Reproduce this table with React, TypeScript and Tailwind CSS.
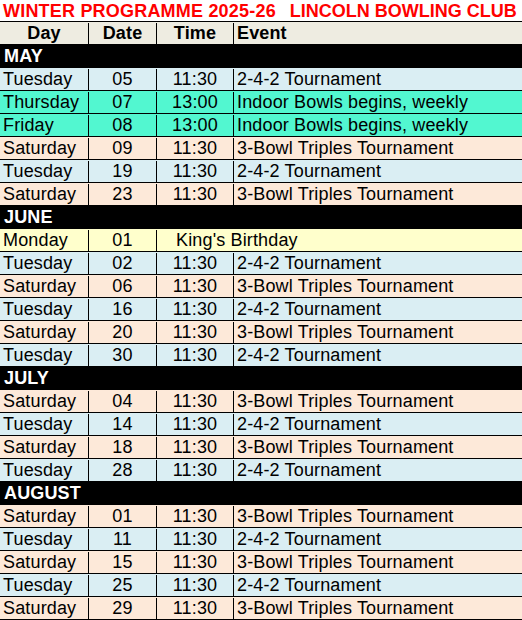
type Row =
  | { kind: 'month'; label: string }
  | { kind: 'event'; day: string; date: string; time: string; event: string; tone: 'blue' | 'peach' | 'teal' }
  | { kind: 'holiday'; day: string; date: string; label: string };

const t242 = '2-4-2 Tournament';
const t3b = '3-Bowl Triples Tournament';

const rows: Row[] = [
  { kind: 'month', label: 'MAY' },
  { kind: 'event', day: 'Tuesday', date: '05', time: '11:30', event: t242, tone: 'blue' },
  { kind: 'event', day: 'Thursday', date: '07', time: '13:00', event: 'Indoor Bowls begins, weekly', tone: 'teal' },
  { kind: 'event', day: 'Friday', date: '08', time: '13:00', event: 'Indoor Bowls begins, weekly', tone: 'teal' },
  { kind: 'event', day: 'Saturday', date: '09', time: '11:30', event: t3b, tone: 'peach' },
  { kind: 'event', day: 'Tuesday', date: '19', time: '11:30', event: t242, tone: 'blue' },
  { kind: 'event', day: 'Saturday', date: '23', time: '11:30', event: t3b, tone: 'peach' },
  { kind: 'month', label: 'JUNE' },
  { kind: 'holiday', day: 'Monday', date: '01', label: "King's Birthday" },
  { kind: 'event', day: 'Tuesday', date: '02', time: '11:30', event: t242, tone: 'blue' },
  { kind: 'event', day: 'Saturday', date: '06', time: '11:30', event: t3b, tone: 'peach' },
  { kind: 'event', day: 'Tuesday', date: '16', time: '11:30', event: t242, tone: 'blue' },
  { kind: 'event', day: 'Saturday', date: '20', time: '11:30', event: t3b, tone: 'peach' },
  { kind: 'event', day: 'Tuesday', date: '30', time: '11:30', event: t242, tone: 'blue' },
  { kind: 'month', label: 'JULY' },
  { kind: 'event', day: 'Saturday', date: '04', time: '11:30', event: t3b, tone: 'peach' },
  { kind: 'event', day: 'Tuesday', date: '14', time: '11:30', event: t242, tone: 'blue' },
  { kind: 'event', day: 'Saturday', date: '18', time: '11:30', event: t3b, tone: 'peach' },
  { kind: 'event', day: 'Tuesday', date: '28', time: '11:30', event: t242, tone: 'blue' },
  { kind: 'month', label: 'AUGUST' },
  { kind: 'event', day: 'Saturday', date: '01', time: '11:30', event: t3b, tone: 'peach' },
  { kind: 'event', day: 'Tuesday', date: '11', time: '11:30', event: t242, tone: 'blue' },
  { kind: 'event', day: 'Saturday', date: '15', time: '11:30', event: t3b, tone: 'peach' },
  { kind: 'event', day: 'Tuesday', date: '25', time: '11:30', event: t242, tone: 'blue' },
  { kind: 'event', day: 'Saturday', date: '29', time: '11:30', event: t3b, tone: 'peach' },
];

const toneClass = {
  blue: 'bg-[#daeef3]',
  peach: 'bg-[#fde9d9]',
  teal: 'bg-[#52f7d0]',
};

// 23px rows, 1px top rule, text sits 1px low like the sheet
const rowBase = 'flex h-[23px] border-t border-black pt-[1px] whitespace-nowrap';

export default function App() {
  return (
    <div className="w-[522px] h-[620px] bg-white text-black font-['Liberation_Sans',Arial,sans-serif] text-[18px] leading-[21px] tracking-[0.15px]">
      <div className="h-[21px] flex items-center gap-[14px] pl-[3px] pt-[1px] font-bold text-[#ff0000] whitespace-nowrap tracking-normal">
        <span className="tracking-[0.2px]">WINTER PROGRAMME 2025-26</span>
        <span>LINCOLN BOWLING CLUB</span>
      </div>

      <div className="border-b border-black">
        <div className={`${rowBase} bg-[#eeece1] font-bold`}>
          <div className="w-[89px] border-r border-black text-center">Day</div>
          <div className="w-[68px] border-r border-black text-center">Date</div>
          <div className="w-[77px] border-r border-black text-center">Time</div>
          <div className="flex-1 pl-[3px]">Event</div>
        </div>

        {rows.map((row, i) => {
          if (row.kind === 'month') {
            return (
              <div key={i} className={`${rowBase} bg-black text-white font-bold pl-[4px]`}>
                {row.label}
              </div>
            );
          }
          if (row.kind === 'holiday') {
            return (
              <div key={i} className={`${rowBase} bg-[#ffffcc]`}>
                <div className="w-[89px] border-r border-black pl-[3px]">{row.day}</div>
                <div className="w-[68px] border-r border-black text-center">{row.date}</div>
                <div className="flex-1 pl-[19px]">{row.label}</div>
              </div>
            );
          }
          return (
            <div key={i} className={`${rowBase} ${toneClass[row.tone]}`}>
              <div className="w-[89px] border-r border-black pl-[3px]">{row.day}</div>
              <div className="w-[68px] border-r border-black text-center">{row.date}</div>
              <div className="w-[77px] border-r border-black text-center">{row.time}</div>
              <div className="flex-1 pl-[3px]">{row.event}</div>
            </div>
          );
        })}
      </div>
    </div>
  );
}
